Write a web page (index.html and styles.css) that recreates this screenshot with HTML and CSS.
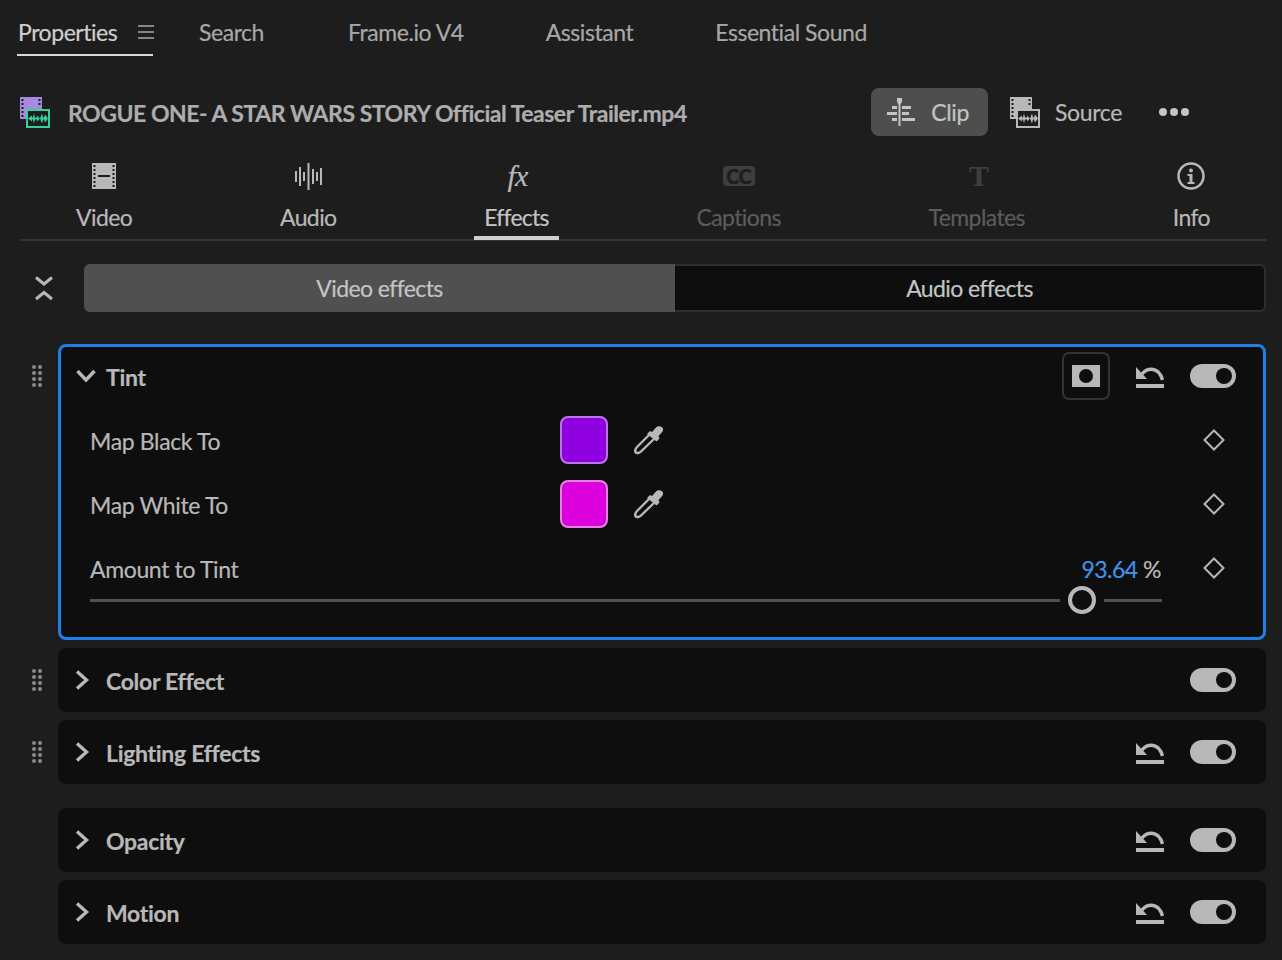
FILE: index.html
```html
<!DOCTYPE html>
<html lang="en">
<head>
  <meta charset="UTF-8">
  <title>Properties - Effects</title>
  <link rel="stylesheet" href="styles.css">
</head>
<body>
  <svg class="defs" width="0" height="0">
    <symbol id="reset" viewBox="0 0 28 23">
      <path d="M6 9C12 2 23 2 26.500 15" fill="none" stroke="currentColor" stroke-width="3.400"/>
      <path d="M0 2v12h11z" fill="currentColor"/>
      <rect y="19" width="28" height="4" fill="currentColor"/>
    </symbol>
    <symbol id="diamond" viewBox="0 0 24 24">
      <path d="M12 2.500 21.500 12 12 21.500 2.500 12z" fill="none" stroke="currentColor" stroke-width="2"/>
    </symbol>
    <symbol id="grip" viewBox="0 0 10 22">
      <g fill="currentColor">
        <circle cx="2" cy="2" r="2"/><circle cx="8" cy="2" r="2"/>
        <circle cx="2" cy="8" r="2"/><circle cx="8" cy="8" r="2"/>
        <circle cx="2" cy="14" r="2"/><circle cx="8" cy="14" r="2"/>
        <circle cx="2" cy="20" r="2"/><circle cx="8" cy="20" r="2"/>
      </g>
    </symbol>
    <symbol id="chev-right" viewBox="0 0 20 20">
      <path d="M2 1.500 11.500 10 2 18.500" fill="none" stroke="currentColor" stroke-width="3.400"/>
    </symbol>
    <symbol id="dropper" viewBox="0 0 30 30">
      <path d="M17 8 4 21c-2.500 2.500-3.500 4.500-2.500 6s3.500 1.500 6-1L21 13" fill="none" stroke="currentColor" stroke-width="2.400"/>
      <path d="M13 9l3-3 2 1 4-4.500c2-2 6.500-1.500 7 1.500.3 2-1 3.500-4.500 7l1 2.500-3 3z" fill="currentColor"/>
    </symbol>
    <symbol id="wave" viewBox="0 0 20 12">
      <path d="M0 6l4-3v2h1l1-4 1 4h2V3l3 3-3 3V7H7l-1 4-1-4H4v2zM12 6l2-5 1 4h1l1-3 3 4-3 4-1-3h-1l-1 4z" fill="currentColor"/>
    </symbol>
  </svg>

  <div class="panel-tabs">
    <div class="panel-tab active">Properties
      <svg class="menu-icon" width="16" height="14" viewBox="0 0 16 14"><path d="M0 1h16M0 7h16M0 13h16" stroke="currentColor" stroke-width="1.500"/></svg>
    </div>
    <div class="panel-tab">Search</div>
    <div class="panel-tab">Frame.io V4</div>
    <div class="panel-tab">Assistant</div>
    <div class="panel-tab">Essential Sound</div>
  </div>

  <div class="clip-row">
    <svg class="media-icon" width="30" height="31" viewBox="0 0 30 31">
      <rect y="0" width="22" height="22" fill="#a58ae0"/>
      <path d="M2.500 2v18M19.500 2v6" stroke="#1d1d1d" stroke-width="2" stroke-dasharray="2 2"/>
      <rect x="7" y="13" width="22" height="17" fill="#1d1d1d" stroke="#2fd39b" stroke-width="2"/>
      <use href="#wave" x="8" y="15" width="20" height="13" color="#2fd39b"/>
    </svg>
    <h1 class="clip-title">ROGUE ONE- A STAR WARS STORY Official Teaser Trailer.mp4</h1>
    <div class="scope-btn selected">
      <svg width="28" height="28" viewBox="0 0 28 28" fill="currentColor">
        <path d="M10 0h5v4l-1.500 2h-2L10 4z"/><rect x="11.500" y="5" width="2" height="23"/>
        <rect x="5" y="8" width="5" height="3"/><rect x="0" y="14" width="10" height="3"/><rect x="5" y="20" width="5" height="3"/>
        <rect x="15" y="8" width="9" height="3"/><rect x="15" y="14" width="7" height="3"/><rect x="15" y="20" width="13" height="3"/>
      </svg>
      Clip
    </div>
    <div class="scope-btn source">
      <svg width="30" height="31" viewBox="0 0 30 31">
        <rect width="22" height="22" fill="#b8b8b8"/>
        <path d="M2.500 2v18M19.500 2v6" stroke="#1d1d1d" stroke-width="2" stroke-dasharray="2 2"/>
        <rect x="7" y="13" width="22" height="17" fill="#1d1d1d" stroke="#b8b8b8" stroke-width="2"/>
        <use href="#wave" x="8" y="15" width="20" height="13" color="#b8b8b8"/>
      </svg>
      Source
    </div>
    <div class="more-dots"><i></i><i></i><i></i></div>
  </div>

  <div class="category-tabs">
    <div class="cat-tab">
      <span class="cat-icon">
        <svg width="24" height="26" viewBox="0 0 24 26">
          <rect width="24" height="26" fill="#b8b8b8"/>
          <path d="M2.500 2v22M21.500 2v22" stroke="#1d1d1d" stroke-width="2" stroke-dasharray="2 2"/>
          <rect x="6" y="12" width="12" height="2" fill="#1d1d1d"/>
        </svg>
      </span>
      Video
    </div>
    <div class="cat-tab">
      <span class="cat-icon">
        <svg width="27" height="27" viewBox="0 0 27 27">
          <path d="M1 8v11M5 4v19M9 9v9M13.500 0v27M18 6v15M22 9v9M26 5v17" stroke="#b8b8b8" stroke-width="2"/>
        </svg>
      </span>
      Audio
    </div>
    <div class="cat-tab active">
      <span class="cat-icon fx-icon">fx</span>
      Effects
    </div>
    <div class="cat-tab disabled">
      <span class="cat-icon"><span class="cc-icon">CC</span></span>
      Captions
    </div>
    <div class="cat-tab disabled">
      <span class="cat-icon t-icon">T</span>
      Templates
    </div>
    <div class="cat-tab">
      <span class="cat-icon">
        <svg width="28" height="28" viewBox="0 0 28 28">
          <circle cx="14" cy="14" r="12.500" fill="none" stroke="#b8b8b8" stroke-width="2.500"/>
          <circle cx="14" cy="8.500" r="2" fill="#b8b8b8"/>
          <path d="M10.500 12h5v8h2v2h-7v-2h2v-6h-2z" fill="#b8b8b8"/>
        </svg>
      </span>
      Info
    </div>
  </div>

  <div class="segment-row">
    <svg class="collapse-icon" width="20" height="26" viewBox="0 0 20 26">
      <path d="M2 2.500l8 6.500 8-6.500M2 24l8-6.500 8 6.500" fill="none" stroke="#b8b8b8" stroke-width="3"/>
    </svg>
    <div class="segment">
      <div class="segment-item selected">Video effects</div>
      <div class="segment-item">Audio effects</div>
    </div>
  </div>

  <div class="effects">
    <div class="effect-row">
      <svg class="grip" width="10" height="22"><use href="#grip"/></svg>
      <div class="effect-card open">
        <div class="effect-head">
          <svg class="chev" width="20" height="14" viewBox="0 0 20 14"><path d="M1.500 2 10 11 18.500 2" fill="none" stroke="currentColor" stroke-width="3.400"/></svg>
          <span class="effect-name">Tint</span>
          <div class="effect-actions">
            <div class="mask-btn">
              <svg width="28" height="24" viewBox="0 0 28 24"><rect width="28" height="22" y="1" fill="#b8b8b8"/><circle cx="14" cy="12" r="7" fill="#0e0e0e"/></svg>
            </div>
            <svg class="reset" width="28" height="23"><use href="#reset"/></svg>
            <div class="toggle"></div>
          </div>
        </div>
        <div class="param">
          <span class="param-name">Map Black To</span>
          <div class="swatch black-to"></div>
          <svg class="dropper" width="30" height="30"><use href="#dropper"/></svg>
          <svg class="diamond" width="24" height="24"><use href="#diamond"/></svg>
        </div>
        <div class="param">
          <span class="param-name">Map White To</span>
          <div class="swatch white-to"></div>
          <svg class="dropper" width="30" height="30"><use href="#dropper"/></svg>
          <svg class="diamond" width="24" height="24"><use href="#diamond"/></svg>
        </div>
        <div class="param amount">
          <span class="param-name">Amount to Tint</span>
          <span class="param-value"><b>93.64</b> %</span>
          <svg class="diamond" width="24" height="24"><use href="#diamond"/></svg>
        </div>
        <div class="slider">
          <div class="track grow"></div>
          <div class="thumb"></div>
          <div class="track end"></div>
        </div>
      </div>
    </div>

    <div class="effect-row">
      <svg class="grip" width="10" height="22"><use href="#grip"/></svg>
      <div class="effect-card">
        <div class="effect-head">
          <svg class="chev" width="20" height="20"><use href="#chev-right"/></svg>
          <span class="effect-name">Color Effect</span>
          <div class="effect-actions">
            <div class="toggle"></div>
          </div>
        </div>
      </div>
    </div>

    <div class="effect-row">
      <svg class="grip" width="10" height="22"><use href="#grip"/></svg>
      <div class="effect-card">
        <div class="effect-head">
          <svg class="chev" width="20" height="20"><use href="#chev-right"/></svg>
          <span class="effect-name">Lighting Effects</span>
          <div class="effect-actions">
            <svg class="reset" width="28" height="23"><use href="#reset"/></svg>
            <div class="toggle"></div>
          </div>
        </div>
      </div>
    </div>

    <div class="effect-row fixed-start">
      <div class="effect-card">
        <div class="effect-head">
          <svg class="chev" width="20" height="20"><use href="#chev-right"/></svg>
          <span class="effect-name">Opacity</span>
          <div class="effect-actions">
            <svg class="reset" width="28" height="23"><use href="#reset"/></svg>
            <div class="toggle"></div>
          </div>
        </div>
      </div>
    </div>

    <div class="effect-row">
      <div class="effect-card">
        <div class="effect-head">
          <svg class="chev" width="20" height="20"><use href="#chev-right"/></svg>
          <span class="effect-name">Motion</span>
          <div class="effect-actions">
            <svg class="reset" width="28" height="23"><use href="#reset"/></svg>
            <div class="toggle"></div>
          </div>
        </div>
      </div>
    </div>
  </div>
</body>
</html>
```

FILE: styles.css
```css
* {
  box-sizing: border-box;
}
html, body {
  height: 960px;
  overflow: hidden;
}
body {
  margin: 0;
  background: #1d1d1d;
  color: #b8b8b8;
  font-family: Lato, "Noto Sans", sans-serif;
  font-size: 23px;
  letter-spacing: -0.36px;
  -webkit-text-stroke: 0.2px;
}
.defs {
  position: absolute;
}

/* top panel tabs */
.panel-tabs {
  display: flex;
  height: 56px;
  padding-left: 17px;
}
.panel-tab {
  display: flex;
  align-items: center;
  height: 56px;
  margin-right: 82px;
  padding-top: 8px;
  letter-spacing: -0.45px;
  white-space: nowrap;
  color: #a8a8a8;
}
.panel-tab:nth-child(2) {
  margin-right: 84px;
}
.panel-tab.active {
  width: 136px;
  margin-right: 46px;
  padding-left: 1px;
  padding-top: 10px;
  color: #cfcfcf;
  border-bottom: 2px solid #d8d8d8;
}
.menu-icon {
  margin-left: auto;
  position: relative;
  left: 1px;
  color: #a8a8a8;
}

/* clip title row */
.clip-row {
  display: flex;
  align-items: center;
  height: 48px;
  margin-top: 32px;
  padding-left: 20px;
}
.media-icon {
  margin-right: 18px;
  flex: none;
}
.clip-title {
  margin: 0;
  padding-top: 1px;
  font-size: 23px;
  font-weight: 700;
  letter-spacing: -0.47px;
  white-space: nowrap;
  color: #adadad;
}
.scope-btn {
  display: flex;
  align-items: center;
  gap: 16px;
  height: 48px;
  padding: 0 22px;
  border-radius: 8px;
}
.scope-btn.source {
  gap: 15px;
}
.scope-btn.selected {
  margin-left: auto;
  padding: 0 19px 0 16px;
  background: #4e4e4e;
  color: #c4c4c4;
}
.more-dots {
  display: flex;
  gap: 3px;
  margin: 0 93px 0 15px;
}
.more-dots i {
  width: 8px;
  height: 8px;
  border-radius: 50%;
  background: #c4c4c4;
}

/* video / audio / effects tabs */
.category-tabs {
  display: flex;
  justify-content: space-between;
  height: 81px;
  margin: 24px 16px 0 20px;
  padding: 0 46px;
  border-bottom: 2px solid #333;
}
.cat-tab {
  display: flex;
  flex-direction: column;
  align-items: center;
  height: 80px;
  padding: 0 10px;
  letter-spacing: -0.6px;
  white-space: nowrap;
}
.cat-icon {
  display: flex;
  align-items: center;
  justify-content: center;
  height: 32px;
  margin-bottom: 11px;
}
.cat-tab.active {
  letter-spacing: -0.8px;
  border-bottom: 4px solid #cfcfcf;
  color: #c4c4c4;
}
.cat-tab.disabled {
  color: #5c5c5c;
}
.fx-icon {
  padding-left: 2px;
  font-family: "Liberation Serif", serif;
  font-style: italic;
  font-size: 30px;
  color: #b8b8b8;
}
.cc-icon {
  width: 32px;
  height: 20px;
  border-radius: 4px;
  background: #3e3e3e;
  color: #1d1d1d;
  font-size: 20px;
  font-weight: 900;
  line-height: 20px;
  text-align: center;
}
.t-icon {
  padding-left: 4px;
  font-family: "Liberation Serif", serif;
  font-size: 30px;
  font-weight: 700;
  color: #3e3e3e;
}

/* video / audio effects switch */
.segment-row {
  display: flex;
  align-items: center;
  margin: 23px 16px 0 34px;
}
.collapse-icon {
  margin-right: 30px;
  flex: none;
}
.segment {
  flex: 1;
  display: flex;
  height: 48px;
}
.segment-item {
  flex: 1;
  display: flex;
  align-items: center;
  justify-content: center;
  padding-bottom: 1px;
  letter-spacing: -0.6px;
  color: #c4c4c4;
  background: #0e0e0e;
  border: 2px solid #2e2e2e;
  border-left: 0;
  border-radius: 0 6px 6px 0;
}
.segment-item.selected {
  flex: 0 0 591px;
  background: #505050;
  border: 0;
  border-radius: 6px 0 0 6px;
}

/* effect cards */
.effects {
  display: flex;
  flex-direction: column;
  gap: 8px;
  margin: 32px 16px 0 32px;
}
.effect-row {
  display: flex;
  align-items: flex-start;
  padding-left: 26px;
}
.effect-row .grip {
  flex: none;
  margin: 21px 16px 0 -26px;
  color: #8a8a8a;
}
.effect-row.fixed-start {
  margin-top: 16px;
}
.effect-card {
  flex: 1;
  min-width: 0;
  background: #0e0e0e;
  border-radius: 8px;
}
.effect-card.open {
  padding-bottom: 23px;
  border: 3px solid #1f7fe8;
}
.effect-head {
  display: flex;
  align-items: center;
  height: 64px;
  padding: 0 30px 0 17px;
}
.open .effect-head {
  height: 48px;
  margin-top: 5px;
  padding: 0 27px 0 15px;
}
.chev {
  flex: none;
  margin-right: 11px;
}
.open .chev {
  margin-right: 10px;
}
.effect-name {
  font-weight: 700;
  letter-spacing: -0.3px;
  padding-top: 1px;
}
.effect-actions {
  display: flex;
  align-items: center;
  gap: 26px;
  margin-left: auto;
}
.mask-btn {
  display: flex;
  align-items: center;
  justify-content: center;
  width: 48px;
  height: 48px;
  border: 2px solid #333;
  border-radius: 7px;
}
.toggle {
  position: relative;
  width: 46px;
  height: 24px;
  border-radius: 12px;
  background: #b8b8b8;
}
.toggle::after {
  content: "";
  position: absolute;
  top: 4px;
  right: 4px;
  width: 16px;
  height: 16px;
  border-radius: 50%;
  background: #0e0e0e;
}

/* parameters in an open effect */
.param {
  display: flex;
  align-items: center;
  height: 64px;
  padding: 0 37px 0 29px;
}
.open .effect-head + .param {
  margin-top: 8px;
}
.param-name {
  flex: none;
  width: 470px;
  padding-top: 2px;
}
.swatch {
  flex: none;
  width: 48px;
  height: 48px;
  border-radius: 8px;
  border: 2px solid;
}
.black-to {
  background: #8f00e0;
  border-color: #b878e0;
}
.white-to {
  background: #dc00dc;
  border-color: #e680e6;
}
.dropper {
  margin-left: 26px;
  flex: none;
}
.diamond {
  flex: none;
  margin-left: auto;
}
.param.amount {
  height: 34px;
  margin-top: 15px;
}
.param-value {
  margin-left: auto;
  padding-top: 2px;
  white-space: nowrap;
}
.param-value b {
  font-weight: 400;
  letter-spacing: -0.6px;
  color: #3f94ea;
}
.amount .diamond {
  margin-left: 41px;
}
.slider {
  display: flex;
  align-items: center;
  height: 28px;
  margin-top: 1px;
  padding: 0 101px 0 29px;
}
.track {
  height: 3px;
  background: #505050;
}
.track.grow {
  flex: 1;
}
.track.end {
  width: 58px;
}
.thumb {
  flex: none;
  width: 28px;
  height: 28px;
  margin: 0 8px;
  border: 4px solid #b8b8b8;
  border-radius: 50%;
}
```
